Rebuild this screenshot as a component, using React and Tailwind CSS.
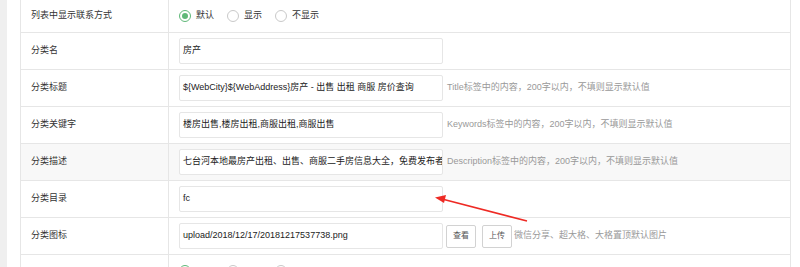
import React from "react";

const font = { fontFamily: '"Liberation Sans", "Noto Sans CJK SC", Arial, sans-serif' };

function Radio({ checked, label, labelWidth }) {
  return (
    <div className="flex items-center">
      <span
        className={
          "w-[12px] h-[12px] rounded-full border flex items-center justify-center " +
          (checked ? "border-[#5FB878]" : "border-[#c9c9c9]")
        }
      >
        {checked && <span className="w-[6px] h-[6px] rounded-full bg-[#5FB878]" />}
      </span>
      {label ? (
        <span className="ml-[5px] text-[9px] text-[#333]">{label}</span>
      ) : (
        <span className="ml-[5px]" style={{ width: labelWidth }} />
      )}
    </div>
  );
}

function Radios({ noLabels }) {
  return (
    <div className="flex items-center gap-[13px]">
      <Radio checked label={noLabels ? null : "默认"} labelWidth={18} />
      <Radio label={noLabels ? null : "显示"} labelWidth={18} />
      <Radio label={noLabels ? null : "不显示"} labelWidth={27} />
    </div>
  );
}

function Input({ value }) {
  return (
    <div className="w-[264px] h-[26px] border border-[#e6e6e6] rounded-[2px] bg-white flex items-center px-[3px] overflow-hidden whitespace-nowrap text-[9px] text-[#222]">
      {value}
    </div>
  );
}

function Row({ label, children, h = "h-[37px]", bg = "bg-white", last }) {
  return (
    <div className={"flex shrink-0 " + h + " " + bg + (last ? "" : " border-b border-[#e6e6e6]")}>
      <div className="w-[148px] shrink-0 border-r border-[#e6e6e6] pl-[10px] flex items-center text-[9px] text-[#333]">
        {label}
      </div>
      <div className="flex-1 pl-[10px] flex items-center">{children}</div>
    </div>
  );
}

function Help({ children }) {
  return <span className="ml-[4px] text-[9px] text-[#999] whitespace-nowrap">{children}</span>;
}

export default function App() {
  return (
    <div className="relative w-[800px] h-[267px] overflow-hidden bg-white flex" style={font}>
      <div className="w-[7px] bg-[#efefef] shrink-0" />
      <div className="w-[13px] shrink-0" />
      <div className="w-[771px] shrink-0 border-l border-r border-[#e6e6e6] flex flex-col">
        <Row label="列表中显示联系方式" h="h-[33px]">
          <Radios />
        </Row>
        <Row label="分类名">
          <Input value="房产" />
        </Row>
        <Row label="分类标题">
          <Input value="${WebCity}${WebAddress}房产 - 出售 出租 商服 房价查询" />
          <Help>Title标签中的内容，200字以内，不填则显示默认值</Help>
        </Row>
        <Row label="分类关键字">
          <Input value="楼房出售,楼房出租,商服出租,商服出售" />
          <Help>Keywords标签中的内容，200字以内，不填则显示默认值</Help>
        </Row>
        <Row label="分类描述" bg="bg-[#f8f8f8]">
          <Input value="七台河本地最房产出租、出售、商服二手房信息大全，免费发布者" />
          <Help>Description标签中的内容，200字以内，不填则显示默认值</Help>
        </Row>
        <Row label="分类目录">
          <Input value="fc" />
        </Row>
        <Row label="分类图标">
          <Input value="upload/2018/12/17/20181217537738.png" />
          <button className="ml-[3px] w-[30px] h-[23px] border border-[#d2d2d2] rounded-[2px] bg-white text-[8px] text-[#555]">
            查看
          </button>
          <button className="ml-[6px] w-[30px] h-[23px] border border-[#d2d2d2] rounded-[2px] bg-white text-[8px] text-[#555]">
            上传
          </button>
          <span className="ml-[2px] text-[9px] text-[#999] whitespace-nowrap">微信分享、超大格、大格置顶默认图片</span>
        </Row>
        <Row label="" h="h-[37px]" last>
          <div className="self-start mt-[10px]">
            <Radios noLabels />
          </div>
        </Row>
      </div>
      <svg className="absolute left-0 top-0 pointer-events-none" width="800" height="267">
        <line x1="527" y1="221" x2="442" y2="199" stroke="#ee2a24" strokeWidth="1.6" />
        <polygon points="435,197.5 446,195 444,203" fill="#ee2a24" />
      </svg>
    </div>
  );
}
